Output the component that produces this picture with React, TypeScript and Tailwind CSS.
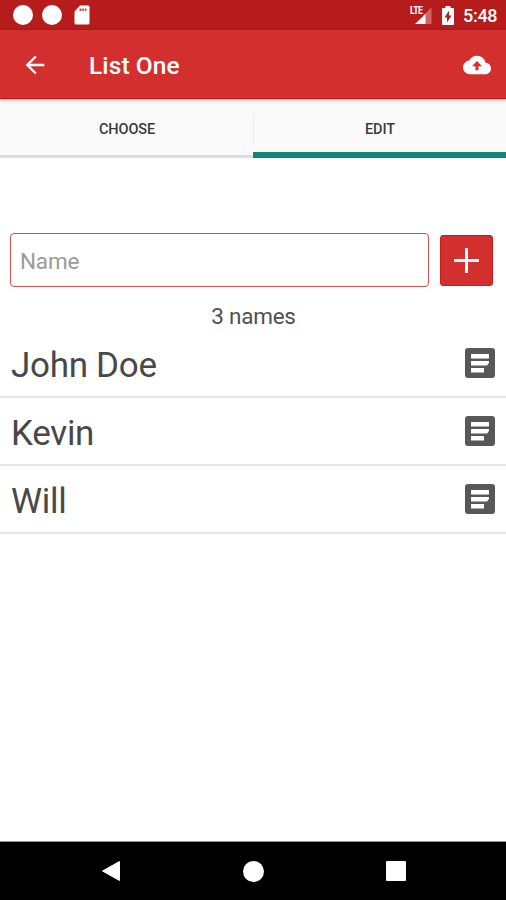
import { useState } from 'react';

const names = ['John Doe', 'Kevin', 'Will'];

const NoteIcon = () => (
  <svg width="30" height="30" viewBox="0 0 30 30">
    <rect x="0" y="0" width="30" height="30" rx="3" fill="#58585a" />
    <path d="M6 6h18v4.500H6zM6 13h18v2l-2 2.500H6zM6 20h13v4.500H6z" fill="#fff" />
  </svg>
);

const StatusBar = () => (
  <div className="flex h-[30px] shrink-0 items-center bg-[#b71c1c] pl-[13px] pr-[9px] text-white">
    <span className="h-[20px] w-[20px] rounded-full bg-white" />
    <span className="ml-[9px] h-[20px] w-[20px] rounded-full bg-white" />
    <svg className="ml-[12px]" width="16" height="20" viewBox="0 0 16 20">
      <path d="M6 .5h8A1.500 1.500 0 0 1 15.500 2v16a1.500 1.500 0 0 1-1.500 1.500H2A1.500 1.500 0 0 1 .5 18V6.500z" fill="#fff" />
      <path d="M5.500 3.500h2v2.500h-2zM8.300 3.500h1.700v2.500H8.300zM10.800 3.500h1.700v2.500h-1.700z" fill="#c94545" />
    </svg>
    <div className="ml-auto flex items-center">
      <div className="flex h-[20px] w-[22px] items-start">
        <span className="w-0 origin-top-left scale-x-[0.8] whitespace-nowrap text-[11px] font-bold leading-[11px] tracking-[-0.7px]">
          LTE
        </span>
        <svg width="22" height="20" viewBox="0 0 22 20">
          <path d="M13 10.500l8.500-8V19H15z" fill="#d06464" />
          <path d="M5 19L15.500 9V19z" fill="#fff" />
        </svg>
      </div>
      <svg className="ml-[10px]" width="12" height="19" viewBox="0 0 12 19">
        <path d="M3.500 0h5v2H11a1 1 0 0 1 1 1v15a1 1 0 0 1-1 1H1a1 1 0 0 1-1-1V3a1 1 0 0 1 1-1h2.500z" fill="#fff" />
        <path d="M7 4.500L2.500 11.500H5V16.500L9.500 9.500H7z" fill="#b71c1c" />
      </svg>
      <span className="ml-[9px] w-[34px] whitespace-nowrap pt-[2px] text-[18px] font-medium leading-[20px] tracking-[-0.3px]">
        5:48
      </span>
    </div>
  </div>
);

const Toolbar = () => (
  <header className="relative z-10 flex h-[69px] shrink-0 items-center border-b border-[#c81414] bg-[#d32f2f] pl-[21px] pr-[15px] text-white shadow-[0_1px_4px_rgba(0,0,0,0.3)]">
    <button className="pt-px">
      <svg width="28" height="28" viewBox="0 0 24 24" fill="#fff">
        <path d="M20 11H7.830l5.590-5.590L12 4l-8 8 8 8 1.410-1.410L7.830 13H20v-2z" />
      </svg>
    </button>
    <h1 className="ml-[40px] pt-[3px] text-[24.500px] font-medium leading-[28px] tracking-[0.1px]">
      List One
    </h1>
    <button className="ml-auto pt-px">
      <svg width="28" height="28" viewBox="0 0 24 24" fill="#fff">
        <path d="M19.350 10.040C18.670 6.590 15.640 4 12 4 9.110 4 6.600 5.640 5.350 8.040 2.340 8.360 0 10.910 0 14c0 3.310 2.690 6 6 6h13c2.760 0 5-2.240 5-5 0-2.640-2.050-4.780-4.650-4.960zM13.300 13v3.500h-2.600V13H7.700L12 8.500l4.300 4.500h-3z" />
      </svg>
    </button>
  </header>
);

const Tabs = () => {
  const [tab, setTab] = useState('edit');

  return (
    <nav className="flex h-[59px] shrink-0 bg-[#fafafa] text-[14.500px] font-medium text-[#3a3a3a]">
      <button
        onClick={() => setTab('choose')}
        className={`flex w-[253px] items-center justify-center pl-px pt-[5px] tracking-[-0.1px] ${
          tab === 'choose' ? 'border-b-[6px] border-[#128675]' : 'border-b-[3px] border-[#dedede]'
        }`}
      >
        CHOOSE
      </button>
      <button
        onClick={() => setTab('edit')}
        className={`flex flex-1 items-center justify-center pt-[8px] tracking-[-0.1px] ${
          tab === 'edit' ? 'border-b-[6px] border-[#128675]' : 'border-b-[3px] border-[#dedede]'
        }`}
      >
        <span className="-mt-[1px] mr-auto h-[31px] w-px bg-[#ececec]" />
        <span className="mr-auto">EDIT</span>
      </button>
    </nav>
  );
};

const NavBar = () => (
  <footer className="flex h-[59px] shrink-0 items-center justify-between border-t border-[#999] bg-black pl-[101px] pr-[100px]">
    <svg width="20" height="22" viewBox="0 0 20 22">
      <path d="M1.500 11L18.500 1.500v19z" fill="#fff" stroke="#fff" strokeLinejoin="round" />
    </svg>
    <span className="h-[21px] w-[21px] rounded-full bg-white" />
    <span className="h-[20px] w-[20px] rounded-[1px] bg-white" />
  </footer>
);

const App = () => {
  return (
    <div className="flex h-[900px] w-[506px] flex-col overflow-hidden bg-white font-['Roboto',sans-serif]">
      <StatusBar />
      <Toolbar />
      <Tabs />
      <main className="flex flex-1 flex-col">
        <div className="mt-[75px] flex items-center pl-[10px]">
          <input
            placeholder="Name"
            className="h-[54px] w-[419px] rounded-[4px] border border-[#d55353] px-[9px] pt-[2px] text-[22.500px] tracking-[-0.2px] text-[#444] outline-none placeholder:text-[#9b9b9b]"
          />
          <button className="ml-[11px] flex h-[51px] w-[53px] items-center justify-center rounded-[3px] border border-[#c91c1c] bg-[#d32f2f]">
            <svg width="25" height="25" viewBox="0 0 25 25">
              <path d="M11 0h3v11h11v3H14v11h-3V14H0v-3h11z" fill="#fff" />
            </svg>
          </button>
        </div>
        <p className="mt-[15px] h-[28px] pl-px text-center text-[22.500px] leading-[28px] tracking-[-0.25px] text-[#505050]">
          {names.length} names
        </p>
        <ul>
          {names.map((name) => (
            <li
              key={name}
              className="flex h-[68px] items-center justify-between border-b-2 border-[#e6e6e6] pl-[11px] pr-[11px]"
            >
              <span className="pt-[6px] text-[35px] leading-[42px] tracking-[-0.3px] text-[#484848]">
                {name}
              </span>
              <NoteIcon />
            </li>
          ))}
        </ul>
      </main>
      <NavBar />
    </div>
  );
};

export default App;
